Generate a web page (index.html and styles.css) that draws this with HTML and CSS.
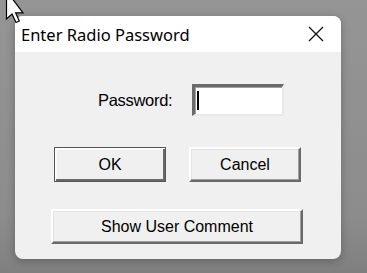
FILE: index.html
```html
<!DOCTYPE html>
<html>
<head>
<meta charset="utf-8">
<link rel="stylesheet" href="styles.css">
</head>
<body>
<div class="dialog">
  <div class="titlebar">
    <span class="title">Enter Radio Password</span>
    <svg class="close" width="16" height="16" viewBox="0 0 16 16"><path d="M1 1L15 15M15 1L1 15" stroke="#111" stroke-width="1.3" fill="none"/></svg>
  </div>
  <div class="content">
    <div class="pwrow">
      <span class="label">Password:</span>
      <div class="input"><span class="caret"></span></div>
    </div>
    <div class="btnrow">
      <div class="btn default"><span>OK</span></div>
      <div class="btn"><span>Cancel</span></div>
    </div>
    <div class="btn wide"><span>Show User Comment</span></div>
  </div>
</div>
<svg class="cursor" width="22" height="30" viewBox="0 0 22 30"><path d="M1.5 -9 L1.5 19 L7 14 L11 22.5 L14.3 21 L10.6 12.8 L18 12.8 Z" fill="#fff" stroke="#000" stroke-width="1.2" stroke-linejoin="miter"/></svg>
</body>
</html>
```
FILE: styles.css
```css
html, body { margin: 0; padding: 0; }
body {
  width: 367px;
  height: 273px;
  overflow: hidden;
  background: linear-gradient(#959595, #8c8c8c 80%, #7f7f7f);
  padding: 16px 0 0 15px;
  box-sizing: border-box;
  position: relative;
  font-family: "Liberation Sans", Arial, sans-serif;
}
.dialog {
  width: 326px;
  height: 243px;
  background: #f0f0f0;
  border-radius: 8px;
  overflow: hidden;
  box-shadow: 0 2px 8px rgba(0,0,0,0.25);
  display: flex;
  flex-direction: column;
}
.titlebar {
  height: 36px;
  background: #ffffff;
  display: flex;
  align-items: center;
  justify-content: space-between;
  padding: 0 17px 0 6px;
  flex-shrink: 0;
}
.title {
  font-family: "Noto Sans", sans-serif;
  font-size: 16.5px;
  color: #000;
}
.close { display: block; }
.content {
  display: flex;
  flex-direction: column;
  padding-top: 32px;
}
.pwrow {
  display: flex;
  align-items: center;
  padding-left: 83px;
  gap: 20px;
  height: 32px;
}
.label {
  font-size: 16.5px;
  color: #000;
  letter-spacing: -0.3px;
}
.input {
  width: 92px;
  height: 32px;
  box-sizing: border-box;
  background: #fff;
  border-top: 3px solid #6a6a6a;
  border-left: 3px solid #6a6a6a;
  border-right: 2px solid #e8e8e8;
  border-bottom: 2px solid #e8e8e8;
  box-shadow: inset 1px 1px 0 #a0a0a0;
  display: flex;
  align-items: center;
  padding-left: 2px;
}
.caret {
  width: 2px;
  height: 19px;
  background: #000;
}
.btnrow {
  display: flex;
  gap: 23px;
  padding-left: 39px;
  margin-top: 31px;
}
.btn {
  width: 112px;
  height: 35px;
  box-sizing: border-box;
  background: #f0f0f0;
  border-top: 2px solid #ffffff;
  border-left: 2px solid #ffffff;
  border-right: 2px solid #696969;
  border-bottom: 2px solid #696969;
  box-shadow: inset -1px -1px 0 #a0a0a0, inset 1px 1px 0 #e3e3e3;
  display: flex;
  align-items: center;
  justify-content: center;
  font-size: 16px;
  color: #000;
}
.btn.default {
  border: 1px solid #555;
  box-shadow: inset 1px 1px 0 #ffffff, inset -2px -2px 0 #696969, inset 2px 2px 0 #f8f8f8;
}
.btn.wide {
  width: 252px;
  margin-left: 36px;
  margin-top: 27px;
}
.cursor {
  position: absolute;
  left: 5px;
  top: 0;
}
```
